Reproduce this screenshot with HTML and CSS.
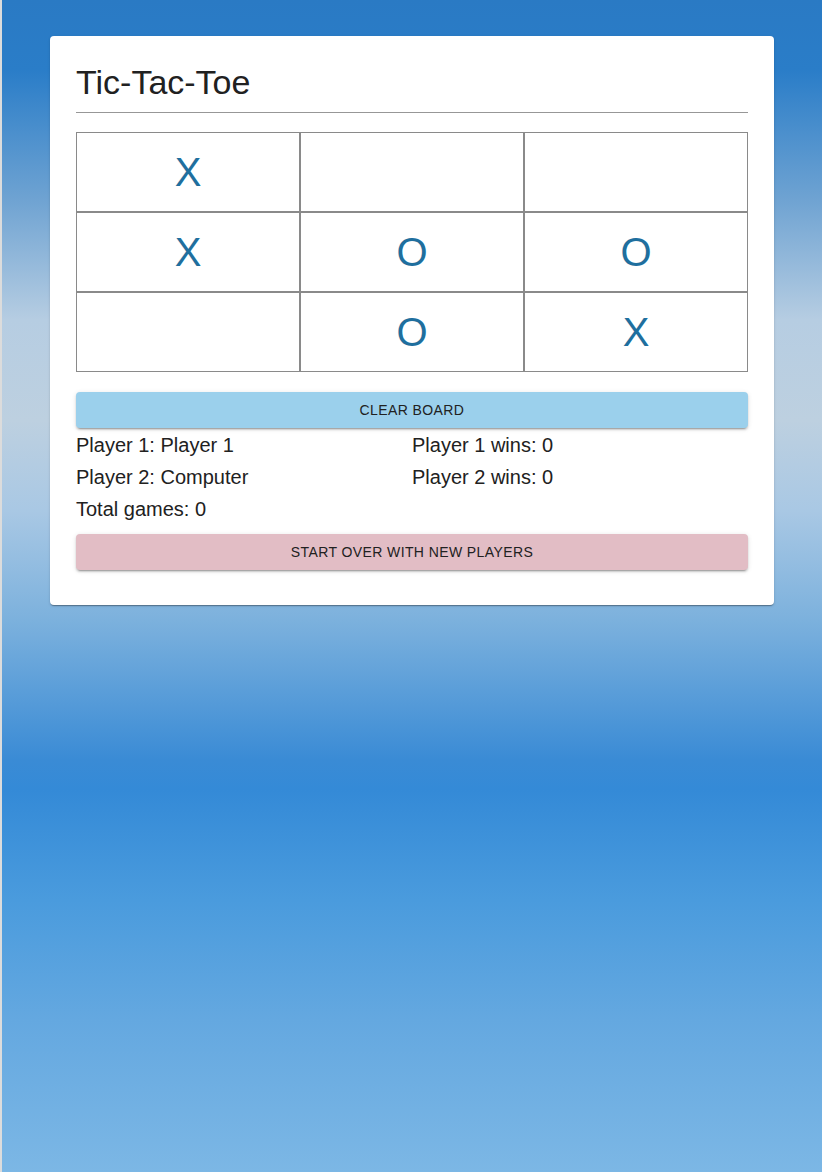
FILE: index.html
```html
<!DOCTYPE html>
<html lang="en">
<head>
<meta charset="utf-8">
<title>Tic-Tac-Toe</title>
<link rel="stylesheet" href="styles.css">
</head>
<body>
<div class="page">
  <main class="card">
    <h1 class="title">Tic-Tac-Toe</h1>
    <hr class="rule">
    <div class="board">
      <div class="cell">X</div>
      <div class="cell"></div>
      <div class="cell"></div>
      <div class="cell">X</div>
      <div class="cell">O</div>
      <div class="cell">O</div>
      <div class="cell"></div>
      <div class="cell">O</div>
      <div class="cell">X</div>
    </div>
    <button class="btn btn-clear" type="button">Clear Board</button>
    <div class="stats">
      <div>Player 1: Player 1</div>
      <div>Player 1 wins: 0</div>
      <div>Player 2: Computer</div>
      <div>Player 2 wins: 0</div>
      <div>Total games: 0</div>
    </div>
    <button class="btn btn-reset" type="button">Start over with new players</button>
  </main>
</div>
</body>
</html>
```

FILE: styles.css
```css
html, body {
  margin: 0;
  padding: 0;
  height: 100%;
}

body {
  font-family: "Liberation Sans", Arial, Helvetica, sans-serif;
  color: #212121;
  background: #dcdcdc;
}

.page {
  box-sizing: border-box;
  min-height: 100%;
  margin-left: 2px;
  padding: 36px 48px;
  background: linear-gradient(to bottom,
    #2a7ac4 0px,
    #2a7dc8 70px,
    #6fa3d2 200px,
    #b6cde2 320px,
    #bdd0e0 420px,
    #a9c8e4 510px,
    #7cb1dd 620px,
    #3a8bd5 760px,
    #348ad7 790px,
    #4a9bdd 900px,
    #64a8e0 1020px,
    #7cb7e5 1172px);
}

.card {
  background: #fff;
  border-radius: 4px;
  padding: 26px 26px 35px;
  box-shadow: 0 2px 1px -1px rgba(0,0,0,.2), 0 1px 1px 0 rgba(0,0,0,.14), 0 1px 3px 0 rgba(0,0,0,.12);
}

.title {
  margin: 0;
  font-size: 34px;
  line-height: 40px;
  font-weight: 400;
  color: #212121;
}

.rule {
  margin: 10px 0 0;
  border: 0;
  border-top: 1px solid #979797;
  height: 0;
}

.board {
  margin-top: 19px;
  display: grid;
  grid-template-columns: repeat(3, 1fr);
  grid-auto-rows: 80px;
}

.cell {
  box-sizing: border-box;
  border: 1px solid #8a8a8a;
  display: flex;
  align-items: center;
  justify-content: center;
  font-size: 40px;
  color: #1f6f9e;
}

.btn {
  display: block;
  width: 100%;
  height: 36px;
  border: 0;
  border-radius: 4px;
  font-family: "Liberation Sans", Arial, Helvetica, sans-serif;
  font-size: 14px;
  letter-spacing: 0.4px;
  text-transform: uppercase;
  color: #212121;
  box-shadow: 0 3px 1px -2px rgba(0,0,0,.2), 0 2px 2px 0 rgba(0,0,0,.14), 0 1px 5px 0 rgba(0,0,0,.12);
  cursor: pointer;
}

.btn-clear {
  margin-top: 20px;
  background: #9bd0ec;
}

.btn-reset {
  margin-top: 9px;
  background: #e2bdc5;
}

.stats {
  display: grid;
  grid-template-columns: 1fr 1fr;
  font-size: 20px;
  line-height: 32px;
  padding-top: 1px;
}
```
